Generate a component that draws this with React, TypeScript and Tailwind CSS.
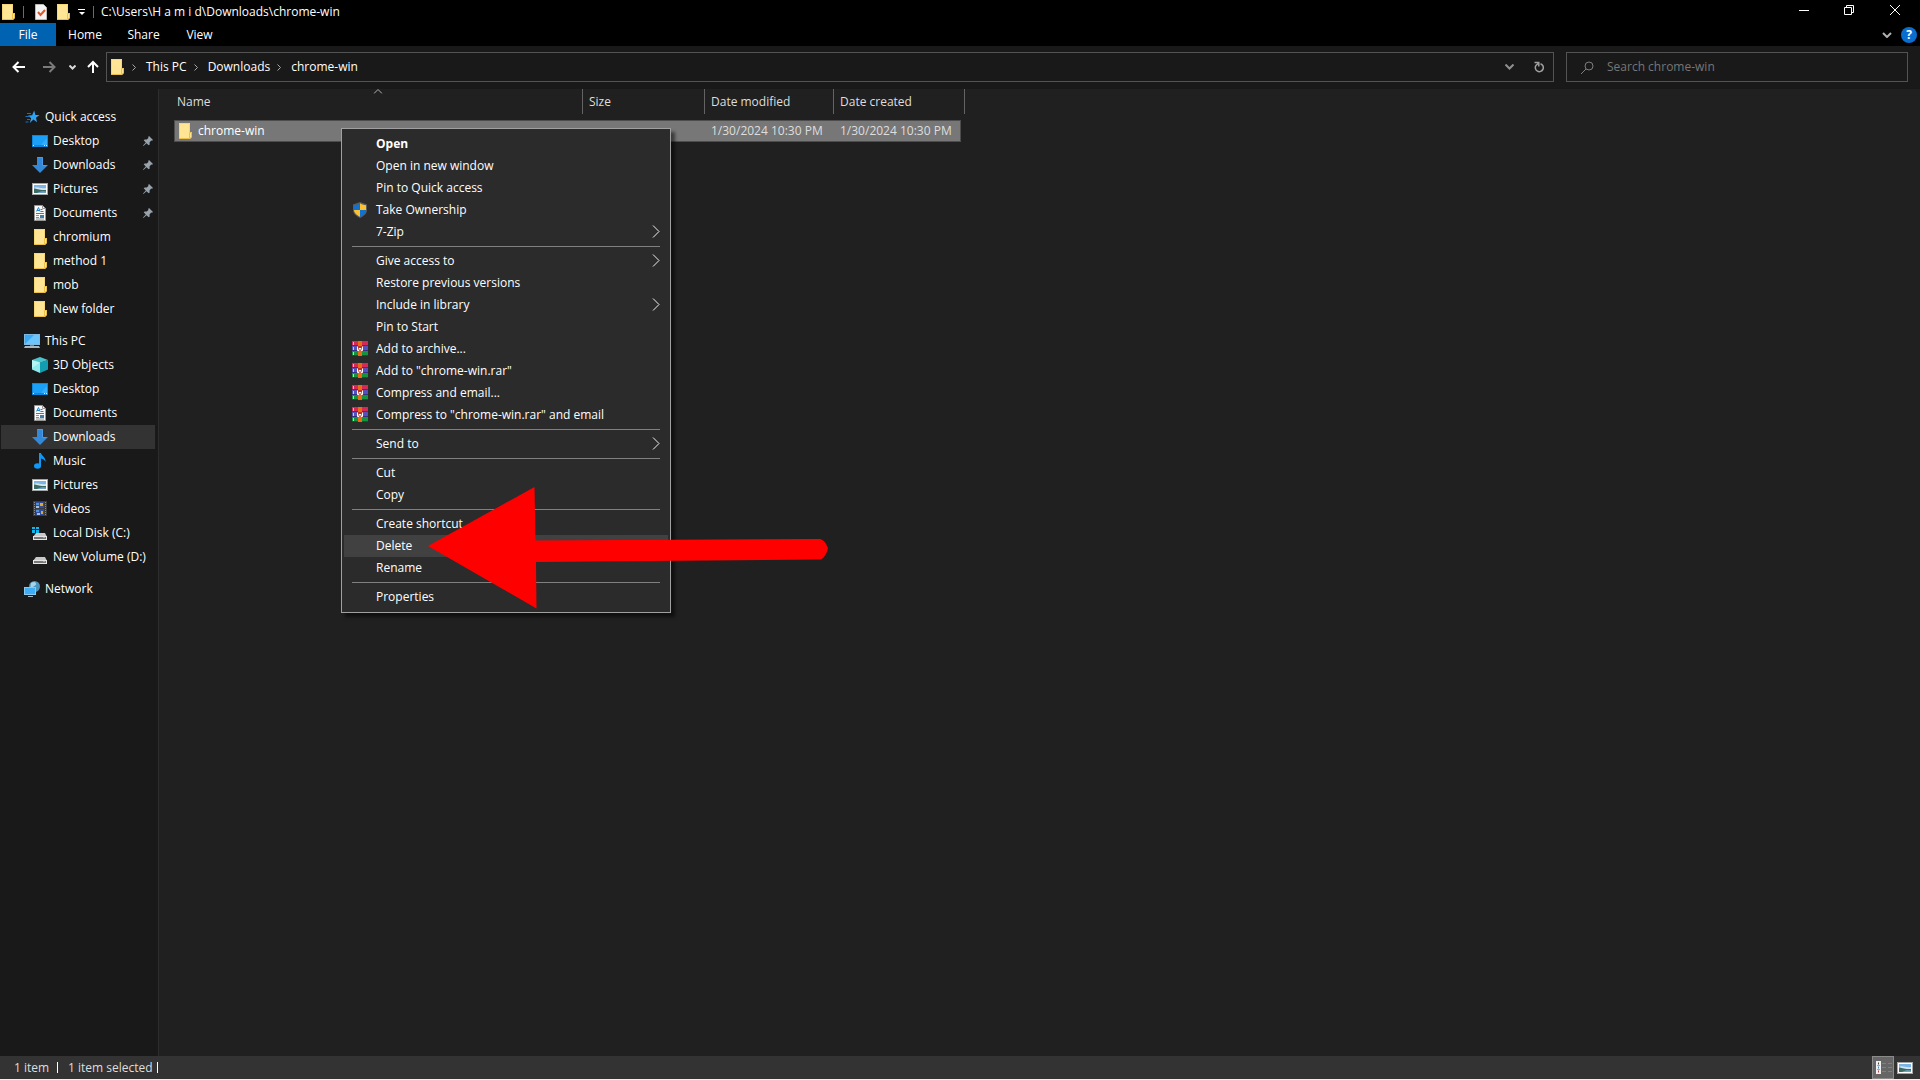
import { ReactNode } from "react";
import clsx from "clsx";

const FolderIcon = () => (
  <svg width="16" height="16" viewBox="0 0 16 16">
    <path d="M2 0h11v9h2v5l-2 2H2z" fill="#ffe594" />
    <path d="M2.500 15.500V.5h10v9" fill="none" stroke="#f5d777" />
    <path d="M2 15.500h10.500l2-1.500v-4.500h-2v6" fill="none" stroke="#eac04a" />
  </svg>
);

const StarIcon = () => (
  <svg width="16" height="16" viewBox="0 0 16 16">
    <path
      d="M10.200 1.500l1.200 4.400 4.100.2-3.500 2.600 1 4.600-3.600-2.700L5.800 14l1.300-4.700-3-2.700 4-.4z"
      fill="#2ea3f5"
    />
    <path d="M3 4.500h4M1.500 7.500h4M3 10.500h3M1.500 13h3" stroke="#1c72b4" />
  </svg>
);

const DesktopIcon = () => (
  <svg width="16" height="16" viewBox="0 0 16 16">
    <rect x="0" y="2" width="16" height="12" fill="#1185dc" />
    <rect x="1" y="3" width="14" height="9" fill="#1ba0f8" />
    <path d="M9 12l6-7v7z" fill="#38adf9" />
    <path d="M1 12.500h1M12 12.500h1M14 12.500h1" stroke="#fff" />
  </svg>
);

const DownloadIcon = () => (
  <svg width="16" height="16" viewBox="0 0 16 16">
    <path d="M5 0h6v8h5l-8 8-8-8h5z" fill="#3488d8" />
    <path d="M5.500 .5h5v8h4" fill="none" stroke="#4b9be6" />
  </svg>
);

const PictureIcon = () => (
  <svg width="16" height="16" viewBox="0 0 16 16">
    <rect x="0.500" y="2.500" width="15" height="11" fill="#fff" stroke="#a4a4a4" />
    <rect x="2" y="4" width="12" height="8" fill="#7db4e6" />
    <path d="M2 7c3-2 6 1 12 0v2H2z" fill="#d5e6f2" />
    <path d="M2 7.500c3 0 5 2 12 1.500V12H2z" fill="#3d6b62" />
    <path d="M5 12c3-2 6-2 9-1.500V12z" fill="#6ba4c8" />
  </svg>
);

const DocumentIcon = () => (
  <svg width="16" height="16" viewBox="0 0 16 16">
    <path d="M2.500 .5h8l3 3v12h-11z" fill="#fafafa" stroke="#979797" />
    <path d="M10.500 .5v3h3" fill="none" stroke="#979797" />
    <path d="M8.500 4.500h2M8.500 6.500h3M4 8.500h8" stroke="#1c87d8" />
    <path d="M4.500 6.500l2-4 1.500 4M5 5.500h3" fill="none" stroke="#1c87d8" />
    <path d="M4 10.500h3M4 12.500h3M4 14h8" stroke="#8f8f8f" />
    <rect x="8" y="10" width="4" height="3" fill="#3f7fa6" />
  </svg>
);

const ComputerIcon = () => (
  <svg width="16" height="16" viewBox="0 0 16 16">
    <rect x="0.500" y="1.500" width="15" height="10" fill="#39a9f5" stroke="#7cb8df" />
    <path d="M1 11l9-9h5v9z" fill="#6cc4fb" />
    <path d="M6 12h4v1H6z" fill="#6f7f8a" />
    <path d="M1 13h14l1 2H0z" fill="#a9b7c1" />
  </svg>
);

const CubeIcon = () => (
  <svg width="16" height="16" viewBox="0 0 16 16">
    <path d="M8 0l8 3-8 3-8-3z" fill="#4fc3cc" />
    <path d="M0 3l8 2.500V16l-8-3.500z" fill="#8fe9ea" />
    <path d="M16 3L8 5.500V16l8-3.500z" fill="#129db0" />
    <path d="M0 3l8 2.500L0 11z" fill="#b6f4f2" />
  </svg>
);

const MusicIcon = () => (
  <svg width="16" height="16" viewBox="0 0 16 16">
    <ellipse cx="5.500" cy="13" rx="3.500" ry="2.800" fill="#0f98f5" />
    <path d="M7 0h2c.5 3 5 4 4.500 9-.8-2-2-3-4.500-3.500V13H7z" fill="#0f98f5" />
  </svg>
);

const VideoIcon = () => (
  <svg width="16" height="16" viewBox="0 0 16 16">
    <rect x="1" y="0" width="14" height="15" fill="#3c3c3c" />
    <path d="M2.500 1v14M13.500 1v14" stroke="#8a8a8a" strokeDasharray="1 1" />
    <rect x="4" y="1" width="8" height="6" fill="#2f4f9c" />
    <rect x="4" y="8" width="8" height="6" fill="#2f4f9c" />
    <path d="M8 2h3v3H8zM9 10h2v3H9z" fill="#d9a93a" />
    <path d="M4 2h3v2H4zM4 9h3v2H4z" fill="#4f8fe0" />
    <path d="M4 5h3v2H4zM5 12h3v2H5z" fill="#a9bcd8" />
  </svg>
);

const DriveIcon = ({ system }: { system?: boolean }) => (
  <svg width="16" height="16" viewBox="0 0 16 16">
    <path d="M4 8h9l2 4H1z" fill="#c9c9c9" />
    <rect x="1" y="11" width="14" height="4" fill="#e4e4e4" />
    <rect x="2" y="12" width="12" height="2" fill="#777" />
    <path d="M11 12.500h2" stroke="#4fe04f" />
    {system && (
      <path d="M0 2h3v2H0zM4 2h3v2H4zM0 5h3v3H0zM4 5h3v3H4z" fill="#12b5ea" />
    )}
  </svg>
);

const NetworkIcon = () => (
  <svg width="16" height="16" viewBox="0 0 16 16">
    <circle cx="10.500" cy="5.500" r="5.500" fill="#4d93bd" />
    <path d="M7 2c3-2 5-1 5 1s-3 2-4 4-2-1-1-5z" fill="#a9d3ea" />
    <rect x="0.500" y="6.500" width="11" height="7" fill="#3fadf6" stroke="#8bc9ee" />
    <path d="M4 15.500h5" stroke="#a9b7c1" />
  </svg>
);

const PinIcon = () => (
  <svg width="10" height="10" viewBox="0 0 10 10" className="shrink-0">
    <path
      d="M6 0l4 4-1 .8-.8-.2-1.700 1.800.2 2-1 .9L3.500 7.200.4 10 0 9.600l2.800-3.100L.7 4.300l1-.9 2 .2L5.400 1.900 5.200 1z"
      fill="#98a3ab"
    />
  </svg>
);

const ShieldIcon = () => (
  <svg width="16" height="16" viewBox="0 0 16 16">
    <path d="M8 0l7 2.500V8c0 4-4 6.500-7 8-3-1.500-7-4-7-8V2.500z" fill="#5d5d5d" />
    <path d="M8 1.200V8H2V3.300C4.500 3 6.500 2.200 8 1.200z" fill="#1173cf" />
    <path d="M8 1.200V8h6V3.300C11.500 3 9.500 2.200 8 1.200z" fill="#fdc02f" />
    <path d="M2 8h6v6.800C5 13.200 2 11 2 8z" fill="#fdc02f" />
    <path d="M14 8H8v6.800c3-1.600 6-3.800 6-6.800z" fill="#1173cf" />
  </svg>
);

const RarIcon = () => (
  <svg width="16" height="16" viewBox="0 0 16 16">
    <rect y="0" width="16" height="5" fill="#d62a55" />
    <rect y="5" width="16" height="5" fill="#5450bd" />
    <rect y="10" width="16" height="5" fill="#159440" />
    <path d="M0 4.500h16" stroke="#96163a" />
    <path d="M0 9.500h16" stroke="#35307f" />
    <path d="M0 14.500h16" stroke="#0b5c26" />
    <path d="M1.500 1v3M1.500 6v3M1.500 11v3" stroke="#f6d743" />
    <rect x="6" y="0" width="4" height="15" fill="#ea6a16" />
    <rect x="5" y="5" width="6" height="5" fill="#c22f1c" />
    <path d="M5.500 5.500v4h1.500v-2h2v2h1.500v-4" fill="none" stroke="#fff" />
  </svg>
);

interface Place {
  label: string;
  icon: ReactNode;
  pinned?: boolean;
  active?: boolean;
}

interface PlaceGroup {
  root: Place;
  items: Place[];
}

const groups: PlaceGroup[] = [
  {
    root: { label: "Quick access", icon: <StarIcon /> },
    items: [
      { label: "Desktop", icon: <DesktopIcon />, pinned: true },
      { label: "Downloads", icon: <DownloadIcon />, pinned: true },
      { label: "Pictures", icon: <PictureIcon />, pinned: true },
      { label: "Documents", icon: <DocumentIcon />, pinned: true },
      { label: "chromium", icon: <FolderIcon /> },
      { label: "method 1", icon: <FolderIcon /> },
      { label: "mob", icon: <FolderIcon /> },
      { label: "New folder", icon: <FolderIcon /> },
    ],
  },
  {
    root: { label: "This PC", icon: <ComputerIcon /> },
    items: [
      { label: "3D Objects", icon: <CubeIcon /> },
      { label: "Desktop", icon: <DesktopIcon /> },
      { label: "Documents", icon: <DocumentIcon /> },
      { label: "Downloads", icon: <DownloadIcon />, active: true },
      { label: "Music", icon: <MusicIcon /> },
      { label: "Pictures", icon: <PictureIcon /> },
      { label: "Videos", icon: <VideoIcon /> },
      { label: "Local Disk (C:)", icon: <DriveIcon system /> },
      { label: "New Volume (D:)", icon: <DriveIcon /> },
    ],
  },
  { root: { label: "Network", icon: <NetworkIcon /> }, items: [] },
];

interface MenuEntry {
  label: string;
  icon?: ReactNode;
  submenu?: boolean;
  bold?: boolean;
  hovered?: boolean;
}

const menu: MenuEntry[][] = [
  [
    { label: "Open", bold: true },
    { label: "Open in new window" },
    { label: "Pin to Quick access" },
    { label: "Take Ownership", icon: <ShieldIcon /> },
    { label: "7-Zip", submenu: true },
  ],
  [
    { label: "Give access to", submenu: true },
    { label: "Restore previous versions" },
    { label: "Include in library", submenu: true },
    { label: "Pin to Start" },
    { label: "Add to archive...", icon: <RarIcon /> },
    { label: 'Add to "chrome-win.rar"', icon: <RarIcon /> },
    { label: "Compress and email...", icon: <RarIcon /> },
    { label: 'Compress to "chrome-win.rar" and email', icon: <RarIcon /> },
  ],
  [{ label: "Send to", submenu: true }],
  [{ label: "Cut" }, { label: "Copy" }],
  [
    { label: "Create shortcut" },
    { label: "Delete", hovered: true },
    { label: "Rename" },
  ],
  [{ label: "Properties" }],
];

const TitleBar = () => (
  <header className="flex h-[23px] items-center bg-black">
    <FolderIcon />
    <span className="ml-[7px] h-3 w-px bg-[#6b6b6b]" />
    <button aria-label="Properties" className="ml-[9px]">
      <svg width="16" height="16" viewBox="0 0 16 16">
        <path d="M2.500 .5h8l3 3v12h-11z" fill="#f4f4f4" stroke="#b9b9b9" />
        <path d="M5 8l2.500 3L12 6" fill="none" stroke="#e0572a" strokeWidth="2" />
      </svg>
    </button>
    <button aria-label="New folder" className="ml-[6px]">
      <FolderIcon />
    </button>
    <button aria-label="Customize Quick Access Toolbar" className="ml-[7px]">
      <svg width="8" height="8" viewBox="0 0 8 8">
        <path d="M0 1.500h7" stroke="#fff" />
        <path d="M1 4h6L4 7z" fill="#fff" />
      </svg>
    </button>
    <span className="ml-[7px] h-3 w-px bg-[#6b6b6b]" />
    <h1 className="ml-[7px] flex-1">C:\Users\H a m i d\Downloads\chrome-win</h1>
    <div className="flex items-center pr-[2px] pb-[3px]">
      <button aria-label="Minimize" className="flex w-11 justify-center">
        <svg width="10" height="10" viewBox="0 0 10 10">
          <path d="M0 5.500h10" stroke="#fff" />
        </svg>
      </button>
      <button aria-label="Restore" className="flex w-[46px] justify-center">
        <svg width="10" height="10" viewBox="0 0 10 10">
          <path d="M.5 2.500h7v7h-7zM2.500 2.500v-2h7v7h-2" fill="none" stroke="#fff" />
        </svg>
      </button>
      <button aria-label="Close" className="flex w-[46px] justify-center">
        <svg width="10" height="10" viewBox="0 0 10 10">
          <path d="M0 0l10 10M10 0L0 10" stroke="#fff" />
        </svg>
      </button>
    </div>
  </header>
);

const Ribbon = () => (
  <div className="flex h-[23px] items-center bg-black">
    <button className="h-full w-14 bg-[#0063b1]">File</button>
    <button className="w-[58px]">Home</button>
    <button className="w-[59px]">Share</button>
    <button className="w-[53px]">View</button>
    <button aria-label="Expand the Ribbon" className="ml-auto">
      <svg width="10" height="6" viewBox="0 0 10 6">
        <path d="M1 1l4 4 4-4" fill="none" stroke="#b0b0b0" strokeWidth="2" />
      </svg>
    </button>
    <button
      aria-label="Help"
      className="mr-[3px] ml-[9px] size-4 rounded-full bg-[#0a6ed1] font-bold leading-4"
    >
      ?
    </button>
  </div>
);

const Crumb = ({ label }: { label: string }) => (
  <>
    <svg width="4" height="7" viewBox="0 0 4 7" className="shrink-0">
      <path d="M.5 .5l3 3-3 3" fill="none" stroke="#a8a8a8" />
    </svg>
    <a href="#" className="mr-[7px] ml-[10px] whitespace-nowrap">
      {label}
    </a>
  </>
);

const AddressBar = () => (
  <div className="flex h-[43px] items-center bg-[#191919] pr-3 pb-px">
    <button aria-label="Back" className="ml-3">
      <svg width="14" height="12" viewBox="0 0 14 12">
        <path d="M13 6H2M6.500 1L1.500 6l5 5" fill="none" stroke="#fff" strokeWidth="2" />
      </svg>
    </button>
    <button aria-label="Forward" className="ml-4">
      <svg width="14" height="12" viewBox="0 0 14 12">
        <path d="M1 6h11M7.500 1l5 5-5 5" fill="none" stroke="#7b7b7b" strokeWidth="2" />
      </svg>
    </button>
    <button aria-label="Recent locations" className="ml-[13px]">
      <svg width="7" height="5" viewBox="0 0 7 5">
        <path d="M.5 .5l3 3 3-3" fill="none" stroke="#d8d8d8" strokeWidth="2" />
      </svg>
    </button>
    <button aria-label="Up" className="ml-[11px]">
      <svg width="12" height="14" viewBox="0 0 12 14">
        <path d="M6 13V2M1 7l5-5 5 5" fill="none" stroke="#fff" strokeWidth="2" />
      </svg>
    </button>
    <nav
      aria-label="Address"
      className="ml-[7px] flex h-[30px] flex-1 items-center border border-[#535353] pl-[2px]"
    >
      <span className="mr-[7px]">
        <FolderIcon />
      </span>
      <Crumb label="This PC" />
      <Crumb label="Downloads" />
      <Crumb label="chrome-win" />
      <button aria-label="Previous locations" className="ml-auto">
        <svg width="9" height="6" viewBox="0 0 9 6">
          <path d="M.5 .5l4 4 4-4" fill="none" stroke="#8f8f8f" strokeWidth="2" />
        </svg>
      </button>
      <button aria-label="Refresh" className="mr-[9px] ml-[20px]">
        <svg width="10" height="12" viewBox="0 0 10 12">
          <path
            d="M6.500 2.800a4 4 0 1 1-4.500 1.600L4.500 2"
            fill="none"
            stroke="#a0a0a0"
            strokeWidth="1.500"
          />
          <path d="M.5 1.500h4.300v4" fill="none" stroke="#a0a0a0" strokeWidth="1.500" />
        </svg>
      </button>
    </nav>
    <div className="ml-3 flex h-[30px] w-[342px] items-center border border-[#535353]">
      <svg width="13" height="13" viewBox="0 0 13 13" className="ml-[14px] shrink-0">
        <circle cx="8" cy="5" r="4" fill="none" stroke="#7d7d7d" />
        <path d="M5 8l-5 5" stroke="#7d7d7d" />
      </svg>
      <input
        type="text"
        aria-label="Search chrome-win"
        placeholder="Search chrome-win"
        className="ml-[13px] min-w-0 flex-1 bg-transparent outline-none placeholder:text-[#767676]"
      />
    </div>
  </div>
);

const PlaceRow = ({ place, nested }: { place: Place; nested?: boolean }) => (
  <li>
    <a
      href="#"
      className={clsx(
        "mr-[3px] ml-px flex h-6 items-center gap-[5px] pr-[2px]",
        nested ? "pl-[31px]" : "pl-[23px]",
        place.active && "bg-[#333333]"
      )}
    >
      {place.icon}
      <span className="flex-1 whitespace-nowrap">{place.label}</span>
      {place.pinned && <PinIcon />}
    </a>
  </li>
);

const Sidebar = () => (
  <nav
    aria-label="Places"
    className="flex w-[159px] shrink-0 flex-col gap-2 border-r border-[#2d2d2d] bg-[#191919] pt-4"
  >
    {groups.map((group) => (
      <ul key={group.root.label}>
        <PlaceRow place={group.root} />
        {group.items.map((item) => (
          <PlaceRow key={item.label} place={item} nested />
        ))}
      </ul>
    ))}
  </nav>
);

const FileList = () => (
  <main className="flex-1 bg-[#202020] pl-[15px]">
    <table className="table-fixed border-separate border-spacing-0 text-left text-[#dedede]">
      <colgroup>
        <col className="w-[409px]" />
        <col className="w-[122px]" />
        <col className="w-[129px]" />
        <col className="w-[127px]" />
        <col className="w-[4px]" />
      </colgroup>
      <thead>
        <tr className="h-[25px]">
          <th className="relative border-r border-[#636363] p-0 pl-[3px] font-normal">
            Name
            <svg
              width="9"
              height="5"
              viewBox="0 0 9 5"
              className="absolute top-0 left-1/2 -translate-x-1/2"
            >
              <path d="M.5 4.500l4-4 4 4" fill="none" stroke="#b0b0b0" />
            </svg>
          </th>
          <th className="border-r border-[#636363] p-0 pl-[6px] font-normal">Size</th>
          <th className="border-r border-[#636363] p-0 pl-[6px] font-normal">
            Date modified
          </th>
          <th colSpan={2} className="border-r border-[#636363] p-0 pl-[6px] font-normal">
            Date created
          </th>
        </tr>
      </thead>
      <tbody>
        <tr className="h-[6px]" />
        <tr className="h-[22px]">
          <td className="border-y border-l border-[#4d4d4d] bg-[#777777] p-0 text-white">
            <div className="flex items-center gap-[5px] pl-[2px]">
              <FolderIcon />
              chrome-win
            </div>
          </td>
          <td className="border-y border-[#4d4d4d] bg-[#777777] p-0" />
          <td className="border-y border-[#4d4d4d] bg-[#777777] p-0 pl-[6px]">
            1/30/2024 10:30 PM
          </td>
          <td className="border-y border-r border-[#4d4d4d] bg-[#777777] p-0 pl-[6px]">
            1/30/2024 10:30 PM
          </td>
          <td className="p-0" />
        </tr>
      </tbody>
    </table>
  </main>
);

const StatusBar = () => (
  <footer className="flex h-6 items-center border-b border-[#f0f0f0] bg-[#333333] text-[#dedede]">
    <span className="w-[43px] pl-[14px] whitespace-nowrap">1 item</span>
    <span className="ml-[14px] h-[11px] w-px bg-white" />
    <span className="w-[99px] pl-[10px] whitespace-nowrap">1 item selected</span>
    <span className="h-[11px] w-px bg-white" />
    <button
      aria-label="Details view"
      className="ml-auto flex h-full w-[22px] items-center justify-end border border-[#8a8a8a] bg-[#666666]"
    >
      <svg width="17" height="14" viewBox="0 0 17 14">
        <rect x="0" y="0" width="5" height="13" fill="#f0f0f0" />
        <path d="M1 4.500h3M1 8.500h3" stroke="#a8a8a8" />
        <path d="M2.500 1.500v2" stroke="#444" />
        <path d="M2.500 5.500v2" stroke="#3b86c8" />
        <path d="M2.500 9.500v2" stroke="#c03b3b" />
        <path d="M6 2.500h4M12 2.500h4M6 6.500h4M12 6.500h4M6 10.500h4M12 10.500h4" stroke="#808080" />
      </svg>
    </button>
    <button aria-label="Large icons view" className="mr-[7px] ml-[3px]">
      <PictureIcon />
    </button>
  </footer>
);

const ContextMenu = () => (
  <div
    role="menu"
    className="absolute top-[128px] left-[341px] w-[330px] border border-[#a0a0a0] bg-[#2b2b2b] px-[2px] py-1 shadow-[4px_4px_3px_rgba(0,0,0,0.5)]"
  >
    {menu.map((entries, i) => (
      <div key={i}>
        {i > 0 && <hr className="mx-2 my-[3px] border-[#808080]" />}
        {entries.map((entry) => (
          <button
            key={entry.label}
            role="menuitem"
            className={clsx(
              "flex h-[22px] w-full items-center pr-2 pl-2 text-left",
              entry.bold && "font-bold",
              entry.hovered && "bg-[#414141]"
            )}
          >
            <span className="mr-2 w-4 shrink-0">{entry.icon}</span>
            <span className="flex-1 whitespace-nowrap">{entry.label}</span>
            {entry.submenu && (
              <svg width="8" height="14" viewBox="0 0 8 14">
                <path d="M1 .5l6 6-6 6" fill="none" stroke="#f0f0f0" />
              </svg>
            )}
          </button>
        ))}
      </div>
    ))}
  </div>
);

const Arrow = () => (
  <svg
    width="401"
    height="122"
    viewBox="0 0 401 122"
    className="pointer-events-none absolute top-[487px] left-[428px]"
  >
    <path
      d="M0 59L106.500 0l1 53.500 284.500-1.500q5 1 8 9-2 9-7 11.500L108 75l.5 46.500z"
      fill="#ff0000"
    />
  </svg>
);

export default function App() {
  return (
    <div className="relative flex min-h-screen flex-col overflow-hidden bg-[#202020] font-['Open_Sans','Noto_Sans',sans-serif] text-[12px] leading-4 text-white">
      <TitleBar />
      <Ribbon />
      <AddressBar />
      <div className="flex flex-1">
        <Sidebar />
        <FileList />
      </div>
      <StatusBar />
      <ContextMenu />
      <Arrow />
    </div>
  );
}
